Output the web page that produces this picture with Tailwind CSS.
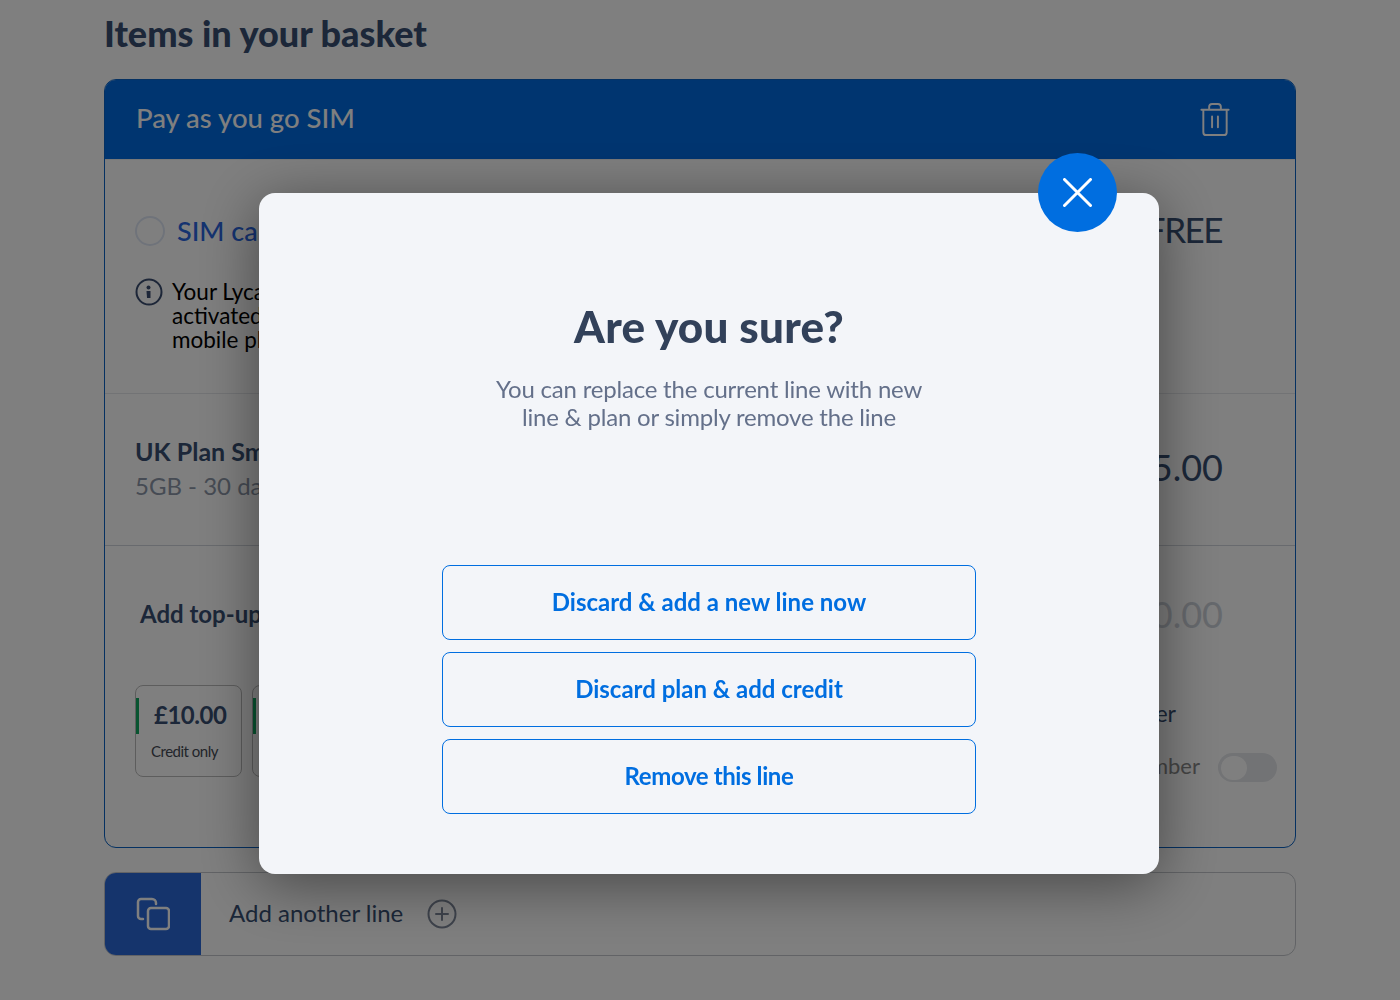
<!DOCTYPE html>
<html lang="en">
<head>
  <meta charset="UTF-8" />
  <title>Basket</title>
  <script src="https://cdn.jsdelivr.net/npm/@tailwindcss/browser@4"></script>
</head>
<body class="bg-white font-['Lato',sans-serif] overflow-hidden h-[1000px]">
  <!-- BASKET PAGE -->
  <main class="w-[1192px] ml-[104px] h-[1000px] overflow-hidden">
    <h1 class="h-[79px] pt-[10px] text-[36px] leading-[46px] font-black text-[#384f72]">Items in your basket</h1>

    <section class="h-[769px] border border-[#0a62c4] rounded-xl overflow-hidden">
      <header class="h-[81px] -mt-px -mx-px bg-[#006ae0] border-b border-b-[#f0f0f0] flex items-center justify-between pl-[32px] pr-[66px] rounded-t-xl">
        <h2 class="pb-[2px] text-[27.5px] font-medium text-white">Pay as you go SIM</h2>
        <svg class="w-[30px] h-[35px]" viewBox="0 0 30 36" fill="none" stroke="#fff" stroke-width="2" stroke-linecap="round" stroke-linejoin="round">
          <path d="M1 8h28M3 8v23a3 3 0 0 0 3 3h18a3 3 0 0 0 3-3V8M9 8V5a3 3 0 0 1 3-3h6a3 3 0 0 1 3 3v3M12 15v11M18 15v11"/>
        </svg>
      </header>

      <div class="h-[234px] border-b border-gray-200 pl-[30px] pr-[72px] pt-[50px] flex justify-between">
        <div class="w-[500px]">
          <div class="flex items-center gap-[12px] h-[42px]">
            <span class="w-[30px] h-[30px] rounded-full border-2 border-[#dfe6f5]"></span>
            <span class="text-[27px] font-medium text-[#2a66e0]">SIM card</span>
          </div>
          <div class="flex gap-[9px] mt-[26px]">
            <svg class="w-[28px] h-[28px]" viewBox="0 0 28 28" fill="none">
              <circle cx="14" cy="14" r="12.5" stroke="#3a4d70" stroke-width="2"/>
              <circle cx="13.5" cy="9.5" r="2" fill="#3a4d70"/>
              <path d="M11.5 13h4v7h-3.500z" fill="#3a4d70"/>
            </svg>
            <p class="mt-[2px] text-[22.5px] leading-[24px] text-black">Your Lycamobile SIM will be<br>activated when you add a<br>mobile plan</p>
          </div>
        </div>
        <span class="mr-[1px] text-[35px] leading-[38px] tracking-[-1.5px] text-[#384f72]">FREE</span>
      </div>

      <div class="h-[152px] border-b border-gray-300 pl-[30px] pr-[72px] pt-[40px] flex justify-between">
        <div class="w-[500px]">
          <p class="text-[25px] leading-[34px] font-bold text-[#384f72]">UK Plan Small</p>
          <p class="text-[24px] leading-[36px] text-[#8d97a8]">5GB - 30 days</p>
        </div>
        <span class="text-[36px] leading-[50px] mt-[8px] text-[#384f72]">£5.00</span>
      </div>

      <div class="relative pl-[30px] pr-[18px] pt-[40px]">
        <div class="flex justify-between pr-[54px]">
          <p class="ml-[5px] text-[24px] leading-[56px] font-bold text-[#384f72] h-[60px]">Add top-up</p>
          <span class="text-[36px] leading-[56px] text-[#cdd2da]">£0.00</span>
        </div>
        <div class="flex justify-between mt-[39px]">
          <div class="flex gap-[10px]">
            <div class="w-[107px] h-[92px] rounded-lg border border-[#bbbbbb] relative">
              <span class="absolute left-0 top-[12px] w-[3px] h-[36px] bg-[#10a860]"></span>
              <p class="pt-[11px] pl-[18px] text-[24px] leading-[36px] font-bold tracking-[-0.5px] text-[#384f72]">£10.00</p>
              <p class="pl-[15px] pt-[8px] text-[15px] leading-[20px] tracking-[-0.5px] text-[#454a54]">Credit only</p>
            </div>
            <div class="w-[107px] h-[92px] rounded-lg border border-[#bbbbbb] relative">
              <span class="absolute left-0 top-[12px] w-[3px] h-[36px] bg-[#10a860]"></span>
            </div>
          </div>
          <div class="flex flex-col items-end">
            <p class="text-[23px] leading-[28px] mt-[14px] pr-[101px] text-[#384f72]">Keep my number</p>
            <div class="flex items-center gap-[18px] mt-[25px]">
              <span class="pb-[2px] text-[22px] leading-[28px] text-[#8a8a8a]">Use my number</span>
              <span class="w-[59px] h-[29px] rounded-full bg-[#e4e6ea] p-[3px]"><span class="block w-[26px] h-[24px] rounded-full bg-white"></span></span>
            </div>
          </div>
        </div>
      </div>
    </section>

    <a class="mt-[24px] h-[84px] border border-[#c4c7cc] rounded-xl flex items-center overflow-hidden">
      <span class="w-[97px] h-[84px] -ml-px bg-[#2a68d8] flex items-center justify-center">
        <svg class="w-[34px] h-[34px]" viewBox="0 0 34 34" fill="none" stroke="#fff" stroke-width="2.500" stroke-linecap="round" stroke-linejoin="round">
          <rect x="12" y="11" width="21" height="21" rx="3"/>
          <path d="M7 22H5a3 3 0 0 1-3-3V5a3 3 0 0 1 3-3h11a4 4 0 0 1 4 4v1"/>
        </svg>
      </span>
      <span class="ml-[28px] pb-[2px] text-[24px] text-[#384f72]">Add another line</span>
      <svg class="ml-[24px] w-[30px] h-[30px]" viewBox="0 0 30 30" fill="none" stroke="#7d8799" stroke-width="2" stroke-linecap="round">
        <circle cx="15" cy="15" r="13.500"/><path d="M15 9v12M9 15h12"/>
      </svg>
    </a>
  </main>

  <!-- OVERLAY + MODAL -->
  <div class="fixed inset-0 bg-black/50">
    <div class="absolute left-[259px] top-[193px] w-[900px] h-[681px] bg-[#f3f5f9] rounded-2xl shadow-[0_10px_60px_rgba(0,0,0,0.45)] flex flex-col items-center">
      <button class="absolute top-[-40px] right-[42px] w-[79px] h-[79px] rounded-full bg-[#006ee0] flex items-center justify-center">
        <svg class="w-[29px] h-[29px]" viewBox="0 0 29 29" stroke="#fff" stroke-width="3" stroke-linecap="round"><path d="M1.500 1.500l26 26M27.500 1.500l-26 26"/></svg>
      </button>
      <h2 class="mt-[104px] text-[44px] leading-[58px] font-black tracking-[0.25px] text-[#32415a]">Are you sure?</h2>
      <p class="mt-[20px] w-[440px] text-center text-[24px] leading-[28px] tracking-[-0.2px] text-[#64708a]">You can replace the current line with new line &amp; plan or simply remove the line</p>
      <div class="mt-[134px] w-[534px] flex flex-col gap-[12px]">
        <button class="h-[75px] pb-[2px] border border-[#006ee0] rounded-lg text-[24px] font-bold text-[#006ee0]">Discard &amp; add a new line now</button>
        <button class="h-[75px] pb-[2px] border border-[#006ee0] rounded-lg text-[24px] font-bold text-[#006ee0]">Discard plan &amp; add credit</button>
        <button class="h-[75px] pb-[2px] border border-[#006ee0] rounded-lg text-[24px] font-bold tracking-[-0.4px] text-[#006ee0]">Remove this line</button>
      </div>
    </div>
  </div>
</body>
</html>
